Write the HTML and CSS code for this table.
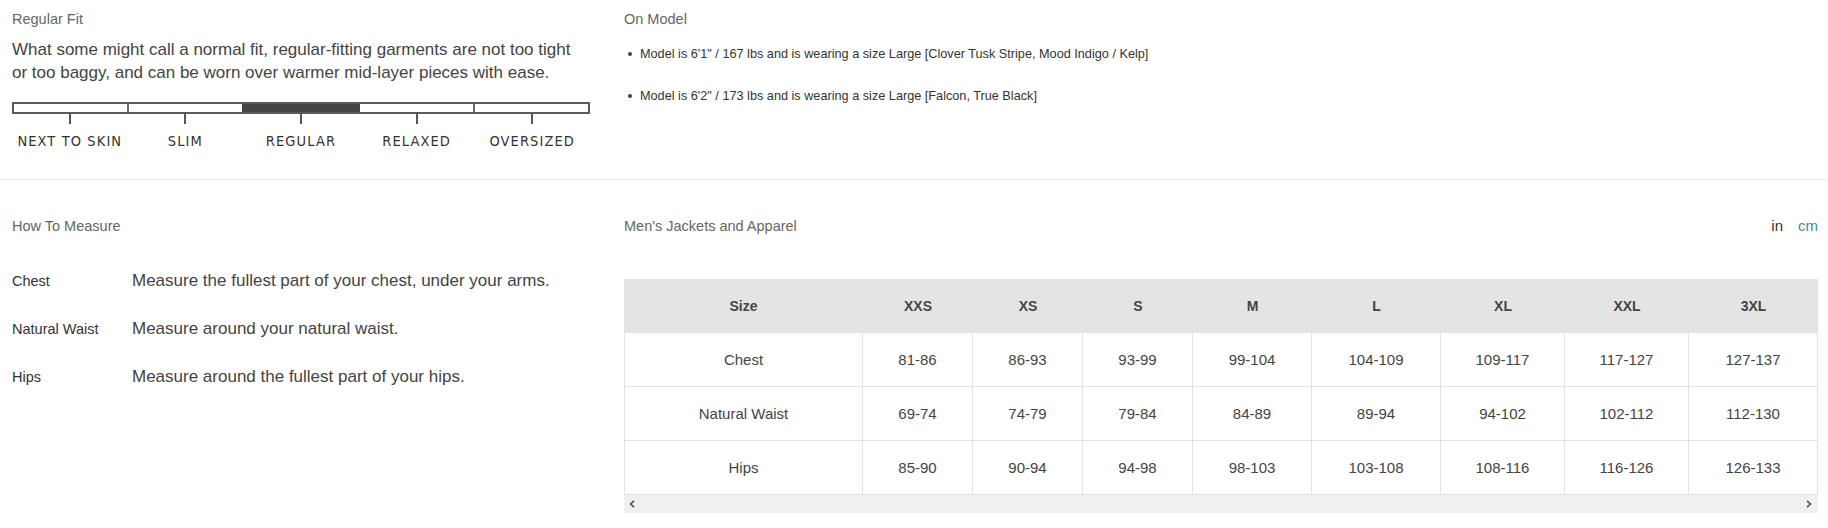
FILE: index.html
```html
<!DOCTYPE html>
<html lang="en">
<head>
<meta charset="utf-8">
<title>Size Guide</title>
<link rel="stylesheet" href="styles.css">
</head>
<body>
<div class="page">
  <section class="band band-top">
    <div class="col">
      <h3 class="label">Regular Fit</h3>
      <p class="fit-desc">What some might call a normal fit, regular-fitting garments are not too tight or too baggy, and can be worn over warmer mid-layer pieces with ease.</p>
      <div class="scale">
        <div class="bar">
          <span class="seg"></span>
          <span class="seg"></span>
          <span class="seg on"></span>
          <span class="seg"></span>
          <span class="seg"></span>
        </div>
        <div class="ticks">
          <span class="tick"></span>
          <span class="tick"></span>
          <span class="tick"></span>
          <span class="tick"></span>
          <span class="tick"></span>
        </div>
        <div class="scale-labels">
          <span>NEXT TO SKIN</span>
          <span>SLIM</span>
          <span>REGULAR</span>
          <span>RELAXED</span>
          <span>OVERSIZED</span>
        </div>
      </div>
    </div>
    <div class="col">
      <h3 class="label">On Model</h3>
      <ul class="model-list">
        <li>Model is 6'1" / 167 lbs and is wearing a size Large [Clover Tusk Stripe, Mood Indigo / Kelp]</li>
        <li>Model is 6'2" / 173 lbs and is wearing a size Large [Falcon, True Black]</li>
      </ul>
    </div>
  </section>

  <section class="band band-bottom">
    <div class="col">
      <h3 class="label">How To Measure</h3>
      <dl class="measure">
        <div class="measure-row"><dt>Chest</dt><dd>Measure the fullest part of your chest, under your arms.</dd></div>
        <div class="measure-row"><dt>Natural Waist</dt><dd>Measure around your natural waist.</dd></div>
        <div class="measure-row"><dt>Hips</dt><dd>Measure around the fullest part of your hips.</dd></div>
      </dl>
    </div>
    <div class="col">
      <div class="chart-head">
        <h3 class="label">Men's Jackets and Apparel</h3>
        <div class="units"><span class="unit">in</span><span class="unit unit-active">cm</span></div>
      </div>
      <div class="table-wrap">
        <table class="chart">
          <colgroup>
            <col class="c-first">
            <col class="c-s">
            <col class="c-s">
            <col class="c-s">
            <col class="c-m">
            <col class="c-l">
            <col class="c-xl">
            <col class="c-xl">
            <col class="c-l">
          </colgroup>
          <thead>
            <tr><th>Size</th><th>XXS</th><th>XS</th><th>S</th><th>M</th><th>L</th><th>XL</th><th>XXL</th><th>3XL</th></tr>
          </thead>
          <tbody>
            <tr><td>Chest</td><td>81-86</td><td>86-93</td><td>93-99</td><td>99-104</td><td>104-109</td><td>109-117</td><td>117-127</td><td>127-137</td></tr>
            <tr><td>Natural Waist</td><td>69-74</td><td>74-79</td><td>79-84</td><td>84-89</td><td>89-94</td><td>94-102</td><td>102-112</td><td>112-130</td></tr>
            <tr><td>Hips</td><td>85-90</td><td>90-94</td><td>94-98</td><td>98-103</td><td>103-108</td><td>108-116</td><td>116-126</td><td>126-133</td></tr>
          </tbody>
        </table>
        <div class="scrollbar">
          <svg class="arrow" width="6" height="8" viewBox="0 0 6 8"><path d="M5 0.8 L1.6 4 L5 7.2" fill="none" stroke="#505050" stroke-width="1.6"/></svg>
          <svg class="arrow" width="6" height="8" viewBox="0 0 6 8"><path d="M1 0.8 L4.4 4 L1 7.2" fill="none" stroke="#505050" stroke-width="1.6"/></svg>
        </div>
      </div>
    </div>
  </section>
</div>
</body>
</html>
```

FILE: styles.css
```css
* { box-sizing: border-box; }

html, body {
  margin: 0;
  padding: 0;
  background: #ffffff;
}

body {
  font-family: "Liberation Sans", Arial, sans-serif;
  color: #3d3d3d;
}

.band {
  display: grid;
  grid-template-columns: 578px 1fr;
  column-gap: 34px;
  padding: 0 10px 0 12px;
}

.band-top {
  padding-top: 10px;
  height: 180px;
  border-bottom: 1px solid #efefef;
}

.band-bottom {
  padding-top: 37px;
}

.label {
  margin: 0;
  font-size: 14.5px;
  line-height: 18px;
  font-weight: normal;
  color: #666666;
}

.fit-desc {
  margin: 10px 0 0;
  font-size: 17px;
  line-height: 23px;
  color: #444444;
}

/* fit scale */
.scale {
  margin-top: 18px;
}

.bar {
  display: flex;
  height: 12px;
  border: 2px solid #5a5a5a;
}

.seg {
  flex: 1;
  background: #ffffff;
}

.seg + .seg {
  border-left: 2px solid #6a6a6a;
}

.seg.on {
  background: #444444;
  border-left-color: #444444;
}

.seg.on + .seg {
  border-left-color: #444444;
}

.ticks,
.scale-labels {
  display: grid;
  grid-template-columns: repeat(5, 1fr);
  justify-items: center;
}

.tick {
  width: 2px;
  height: 10px;
  background: #555555;
}

.scale-labels {
  margin-top: 8px;
  font-family: "DejaVu Sans Condensed", "Liberation Sans Narrow", "Liberation Sans", sans-serif;
  font-stretch: condensed;
  font-size: 14.5px;
  line-height: 18px;
  letter-spacing: 1.1px;
  white-space: nowrap;
  color: #333333;
}

/* on model */
.model-list {
  list-style: none;
  margin: 17px 0 0;
  padding: 0;
  font-size: 12.7px;
  line-height: 18px;
  color: #333333;
}

.model-list li {
  display: flex;
  align-items: center;
  gap: 8px;
  padding-left: 4px;
}

.model-list li + li {
  margin-top: 24px;
}

.model-list li::before {
  content: "";
  flex: none;
  width: 4px;
  height: 4px;
  border-radius: 50%;
  background: #444444;
}

/* how to measure */
.measure {
  margin: 22px 0 0;
}

.measure-row {
  display: flex;
  height: 48px;
  align-items: center;
}

.measure dt {
  width: 120px;
  font-size: 14.5px;
  color: #333333;
}

.measure dd {
  margin: 0;
  font-size: 17px;
  color: #444444;
}

/* chart */
.chart-head {
  display: flex;
  justify-content: space-between;
  align-items: center;
}

.units {
  display: flex;
  gap: 15px;
  font-size: 15px;
  line-height: 18px;
  color: #333333;
}

.unit-active {
  color: #4b8a8e;
}

.table-wrap {
  margin-top: 44px;
}

.chart {
  width: 100%;
  table-layout: fixed;
  border-collapse: separate;
  border-spacing: 0;
  text-align: center;
}

.c-first { width: 239px; }
.c-s { width: 110px; }
.c-m { width: 119px; }
.c-l { width: 129px; }
.c-xl { width: 124px; }

.chart th {
  height: 54px;
  padding: 0;
  background: #e4e4e4;
  font-size: 14px;
  font-weight: bold;
  color: #444444;
}

.chart tbody tr {
  height: 54px;
}

.chart td {
  padding: 0;
  font-size: 15px;
  color: #444444;
  border-right: 1px solid #e2e2e2;
  border-bottom: 1px solid #e2e2e2;
}

.chart td:first-child {
  border-left: 1px solid #e2e2e2;
}

.scrollbar {
  display: flex;
  justify-content: space-between;
  align-items: center;
  height: 18px;
  padding: 0 6px 0 5px;
  background: #f0f0f0;
}

.arrow {
  display: block;
}
```
